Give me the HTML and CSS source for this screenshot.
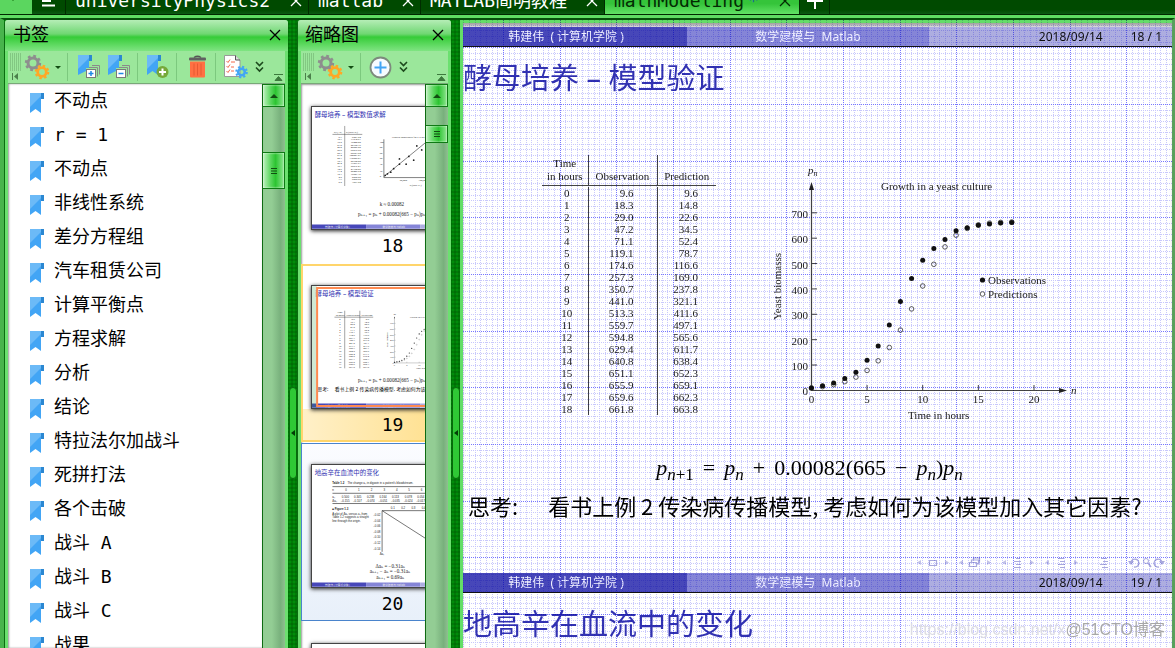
FILE: index.html
```html
<!DOCTYPE html>
<html lang="zh-CN">
<head>
<meta charset="utf-8">
<title>mathModeling</title>
<link rel="stylesheet" href="styles.css">
</head>
<body>
<svg class="defs" aria-hidden="true">
  <defs>
    <symbol id="i-bookmark" viewBox="0 0 14 20">
      <path d="M11 0h3v6h-3z" fill="#2b87d1"/>
      <path d="M0 0h11v20l-5.500-4L0 20z" fill="#42a5f5"/>
      <path d="M0 0h11v3L0 14z" fill="#6cbaf7"/>
    </symbol>
    <symbol id="i-gears" viewBox="0 0 26 26">
      <circle cx="9" cy="9" r="5" fill="none" stroke="#8e8e8e" stroke-width="3"/>
      <circle cx="9" cy="9" r="7" fill="none" stroke="#8e8e8e" stroke-width="2.400" stroke-dasharray="2.750 2.750"/>
      <circle cx="18" cy="18" r="4.300" fill="none" stroke="#ffa726" stroke-width="2.800"/>
      <circle cx="18" cy="18" r="6.200" fill="none" stroke="#ffa726" stroke-width="2.200" stroke-dasharray="2.430 2.430"/>
    </symbol>
    <symbol id="i-more" viewBox="0 0 9 12">
      <path d="M1 1l3.500 3.500L8 1M1 6.500L4.500 10 8 6.500" fill="none" stroke="#1d4a1d" stroke-width="1.600"/>
    </symbol>
    <symbol id="i-close" viewBox="0 0 12 12">
      <path d="M1 1l10 10M11 1L1 11" fill="none" stroke="currentColor" stroke-width="1.300"/>
    </symbol>
    <symbol id="i-pages" viewBox="0 0 23 24">
      <path d="M11 0h3v6h-3z" fill="#2b87d1"/>
      <path d="M0 0h11v13H8v3L0 20z" fill="#42a5f5"/>
      <path d="M0 0h11v3L0 14z" fill="#6cbaf7"/>
      <path d="M14 10.500h7.500v9M11 12.500h8.500v9" fill="none" stroke="#8a8a8a"/>
      <rect x="8.500" y="14.500" width="9" height="8" fill="#fff" stroke="#7a7a7a"/>
    </symbol>
    <symbol id="i-grip" viewBox="0 0 12 28">
      <path d="M0 1h12M0 3h12M0 5h12M0 7h12M0 9h12M0 11h12M0 13h12M0 15h12M0 17h12" stroke="#6ba86b" stroke-dasharray="1 1"/>
      <path d="M2.500 20v7" stroke="#4b804b"/>
      <path d="M8 20v7L4 23.500z" fill="#4b804b"/>
    </symbol>
    <symbol id="i-ext" viewBox="0 0 9 7">
      <path d="M0 .5h9M1 6.500h7L4.500 2.500z" fill="#3d7a3d" stroke="#3d7a3d"/>
    </symbol>
    <symbol id="i-up" viewBox="0 0 8 4"><path d="M0 4h8L4 0z" fill="#124d12"/></symbol>
    <symbol id="i-lines" viewBox="0 0 6 6"><path d="M0 .5h6M0 3h6M0 5.500h6" stroke="#124d12"/></symbol>
    <pattern id="mm-grid" x="40" y="84" width="170" height="170" patternUnits="userSpaceOnUse">
      <g fill="none" stroke-dasharray="1 1" shape-rendering="crispEdges">
        <path id="mm-minor" stroke="#c8c8fc"/>
        <path id="mm-major" stroke="#7777ff"/>
      </g>
    </pattern>
  </defs>
</svg>

<nav class="tabs" aria-label="文档">
  <span class="tab-grip"></span>
  <button class="tab-menu" aria-label="菜单"><svg width="13" height="12" viewBox="0 0 13 12"><path d="M0 1.500h9M0 6h9M0 10.500h13" stroke="#fff" stroke-width="2"/></svg></button>
  <div class="tab tab-a"><button>universityPhysics2</button><button class="x" aria-label="关闭"><svg><use href="#i-close"/></svg></button></div>
  <div class="tab tab-b"><button>matlab</button><button class="x" aria-label="关闭"><svg><use href="#i-close"/></svg></button></div>
  <div class="tab tab-c"><button>MATLAB简明教程</button><button class="x" aria-label="关闭"><svg><use href="#i-close"/></svg></button></div>
  <div class="tab tab-d active"><button>mathModeling<span class="dirty">*</span></button><button class="x" aria-label="关闭"><svg><use href="#i-close"/></svg></button></div>
  <button class="tab-add" aria-label="新建"><svg width="16" height="16" viewBox="0 0 16 16"><path d="M8 0v16M0 8h16" stroke="#fff" stroke-width="2"/></svg></button>
</nav>

<main class="work">
  <section class="panel bookmarks">
    <header><h2>书签</h2><button class="x" aria-label="关闭"><svg><use href="#i-close"/></svg></button></header>
    <div class="toolbar">
      <svg class="grip"><use href="#i-grip"/></svg>
      <button class="gears" aria-label="设置"><svg width="26" height="26"><use href="#i-gears"/></svg><span class="caret"></span></button>
      <i class="sep"></i>
      <button class="tb" aria-label="展开"><svg width="23" height="24"><use href="#i-pages"/><path d="M13 16v5M10.500 18.500h5" stroke="#1e88e5" stroke-width="1.500"/></svg></button>
      <button class="tb" aria-label="折叠"><svg width="23" height="24"><use href="#i-pages"/><path d="M10.500 18.500h5" stroke="#1e88e5" stroke-width="1.500"/></svg></button>
      <i class="sep"></i>
      <button class="tb" aria-label="添加书签"><svg width="23" height="24" viewBox="0 0 23 24"><use href="#i-bookmark" width="14" height="20"/><circle cx="15.500" cy="17" r="6" fill="#76a83a"/><path d="M15.500 13.500v7M12 17h7" stroke="#fff" stroke-width="2"/></svg></button>
      <i class="sep"></i>
      <button class="tb" aria-label="删除"><svg width="19" height="24" viewBox="0 0 19 24"><path d="M6 2.500q3.500-2.500 7 0" fill="none" stroke="#555" stroke-width="1.500"/><rect x="1" y="2.500" width="17" height="3" rx="1" fill="#606060"/><path d="M2 6.500h15v15q0 1-1 1H3q-1 0-1-1z" fill="#ff7043"/><path d="M6 8.500v12M9.500 8.500v12M13 8.500v12" stroke="#e65a32"/></svg></button>
      <i class="sep"></i>
      <button class="tb" aria-label="属性"><svg width="24" height="24" viewBox="0 0 24 24"><path d="M.5.500h11l4.500 4.500v16.500H.5z" fill="#fff" stroke="#9a9a9a"/><path d="M11.500.500V5H16" fill="#ddd" stroke="#555"/><path d="M2.500 6l1.500 1.500 2-3M2.500 11l1.500 1.500 2-3M2.500 16l1.500 1.500 2-3M7 7h4M7 12h3M7 16h3" fill="none" stroke="#f26b4d"/><circle cx="17.500" cy="17" r="3.300" fill="none" stroke="#42a5f5" stroke-width="2.600"/><circle cx="17.500" cy="17" r="5.300" fill="none" stroke="#42a5f5" stroke-width="2" stroke-dasharray="2.080 2.080"/></svg></button>
      <button class="more" aria-label="更多"><svg width="9" height="12"><use href="#i-more"/></svg></button>
      <svg class="ext"><use href="#i-ext"/></svg>
    </div>
    <div class="scroller">
      <ul class="marks">
        <li><svg><use href="#i-bookmark"/></svg><span>不动点</span></li>
        <li><svg><use href="#i-bookmark"/></svg><span>r = 1</span></li>
        <li><svg><use href="#i-bookmark"/></svg><span>不动点</span></li>
        <li><svg><use href="#i-bookmark"/></svg><span>非线性系统</span></li>
        <li><svg><use href="#i-bookmark"/></svg><span>差分方程组</span></li>
        <li><svg><use href="#i-bookmark"/></svg><span>汽车租赁公司</span></li>
        <li><svg><use href="#i-bookmark"/></svg><span>计算平衡点</span></li>
        <li><svg><use href="#i-bookmark"/></svg><span>方程求解</span></li>
        <li><svg><use href="#i-bookmark"/></svg><span>分析</span></li>
        <li><svg><use href="#i-bookmark"/></svg><span>结论</span></li>
        <li><svg><use href="#i-bookmark"/></svg><span>特拉法尔加战斗</span></li>
        <li><svg><use href="#i-bookmark"/></svg><span>死拼打法</span></li>
        <li><svg><use href="#i-bookmark"/></svg><span>各个击破</span></li>
        <li><svg><use href="#i-bookmark"/></svg><span>战斗 A</span></li>
        <li><svg><use href="#i-bookmark"/></svg><span>战斗 B</span></li>
        <li><svg><use href="#i-bookmark"/></svg><span>战斗 C</span></li>
        <li><svg><use href="#i-bookmark"/></svg><span>战果</span></li>
      </ul>
      <div class="bar"><button class="up" aria-label="向上"><svg width="8" height="4"><use href="#i-up"/></svg></button><div class="knob low"><svg width="6" height="6"><use href="#i-lines"/></svg></div></div>
    </div>
  </section>

  <div class="split"><span class="handle"></span></div>

  <section class="panel thumbs">
    <header><h2>缩略图</h2><button class="x" aria-label="关闭"><svg><use href="#i-close"/></svg></button></header>
    <div class="toolbar">
      <svg class="grip"><use href="#i-grip"/></svg>
      <button class="gears" aria-label="设置"><svg width="26" height="26"><use href="#i-gears"/></svg><span class="caret"></span></button>
      <i class="sep"></i>
      <button class="tb" aria-label="放大"><svg width="23" height="23" viewBox="0 0 23 23"><circle cx="11.500" cy="11.500" r="10" fill="#f6fbff" stroke="#7d8a7d" stroke-width="1.800"/><path d="M11.500 5.500v12M5.500 11.500h12" stroke="#42a5f5" stroke-width="2"/></svg></button>
      <button class="more" aria-label="更多"><svg width="9" height="12"><use href="#i-more"/></svg></button>
      <svg class="ext"><use href="#i-ext"/></svg>
    </div>
    <div class="scroller">
      <ol class="pages">
        <li>
          <svg class="page" viewBox="441 46 728 546">
            <text class="t-title" x="453" y="88">酵母培养 – 模型数值求解</text>
            <g class="t-small">
              <path d="M533 168h134M588 130v270" stroke="#333" stroke-width="2"/>
              <text x="540" y="160">pₙ₊₁−pₙ</text><text x="594" y="160">pₙ(665−pₙ)</text>
              <g id="diff-table"></g>
              <path d="M764 190v172h340M764 358L1000 165" fill="none" stroke="#444" stroke-width="3"/>
              <text x="800" y="183">Growth constrained for a yeast</text>
              <text x="745" y="205">100</text><text x="745" y="230">80</text><text x="745" y="255">60</text><text x="745" y="280">50</text><text x="745" y="305">30</text><text x="745" y="335">10</text><text x="745" y="360">0</text>
              <text x="835" y="378">50,000</text><text x="920" y="378">100,000</text><text x="880" y="398">pₙ(665−pₙ)</text>
              <g fill="#222"><circle cx="770" cy="352" r="4"/><circle cx="780" cy="345" r="4"/><circle cx="795" cy="338" r="4"/><circle cx="808" cy="322" r="4"/><circle cx="834" cy="302" r="4"/><circle cx="834" cy="278" r="4"/><circle cx="864" cy="302" r="4"/><circle cx="876" cy="267" r="4"/><circle cx="898" cy="284" r="4"/><circle cx="912" cy="220" r="4"/><circle cx="934" cy="238" r="4"/></g>
            </g>
            <text class="t-math" x="745" y="490">k ≈ 0.00082</text>
            <text class="t-math" x="648" y="533">pₙ₊₁ = pₙ + 0.00082(665 − pₙ)pₙ</text>
            <g class="t-foot"><path d="M441 573h243v19H441z" fill="#4747b9"/><path d="M684 573h243v19H684z" fill="#8585d7"/><path d="M927 573h242v19H927z" fill="#adade0"/><text x="500" y="587">韩建伟 ( 计算机学院 )</text><text x="758" y="587">数学建模与 Matlab</text></g>
          </svg><b>18</b>
        </li>
        <li class="current">
          <svg class="page" viewBox="441 46 728 546">
            <text class="t-title" x="457" y="88">酵母培养 – 模型验证</text>
            <g class="t-small" id="yeast-table"><path d="M542 185h174M588 156v259M656 156v259" stroke="#333" stroke-width="2"/><text x="554" y="168">Time</text><text x="548" y="181">in hours</text><text x="596" y="179">Observation</text><text x="663" y="179">Prediction</text></g>
            <use href="#yeast-chart"/>
            <text class="t-math" x="648" y="478">pₙ₊₁ = pₙ + 0.00082(665 − pₙ)pₙ</text>
            <text class="t-body" x="465" y="515">思考:</text><text class="t-body" x="543" y="515">看书上例 2 传染病传播模型, 考虑如何为该模型</text>
            <g class="t-foot"><path d="M441 573h243v19H441z" fill="#4747b9"/><path d="M684 573h243v19H684z" fill="#8585d7"/><path d="M927 573h242v19H927z" fill="#adade0"/><text x="500" y="587">韩建伟 ( 计算机学院 )</text><text x="758" y="587">数学建模与 Matlab</text></g>
            <path d="M441 46h22v546h-22z" fill="#2a9a3a" fill-opacity=".22"/>
            <path d="M464 54h720v530H464z" fill="none" stroke="#ff8a50" stroke-width="9"/>
          </svg><b>19</b>
        </li>
        <li class="hover">
          <svg class="page" viewBox="441 46 728 546">
            <text class="t-title" x="453" y="88">地高辛在血流中的变化</text>
            <g class="t-mid">
              <text x="532" y="132" font-weight="bold">Table 1.2</text><text x="600" y="132">The change aₙ in digoxin in a patient's bloodstream.</text>
              <path d="M533 142h560M533 172h560M533 218h560" stroke="#333" stroke-width="3"/>
              <text x="532" y="164">n</text><text x="590" y="164">0</text><text x="648" y="164">1</text><text x="705" y="164">2</text><text x="762" y="164">3</text><text x="818" y="164">4</text><text x="874" y="164">5</text><text x="930" y="164">6</text>
              <text x="532" y="194">aₙ</text><text x="575" y="194">0.500</text><text x="630" y="194">0.345</text><text x="688" y="194">0.238</text><text x="744" y="194">0.164</text><text x="800" y="194">0.113</text><text x="858" y="194">0.078</text><text x="914" y="194">0.054</text>
              <text x="532" y="213">Δaₙ</text><text x="570" y="213">−0.155</text><text x="625" y="213">−0.107</text><text x="683" y="213">−0.074</text><text x="740" y="213">−0.051</text><text x="796" y="213">−0.035</text><text x="853" y="213">−0.024</text><text x="909" y="213">−0.017</text>
              <text x="532" y="246" font-weight="bold">■ Figure 1.3</text><text x="532" y="268">A plot of Δaₙ versus aₙ from</text><text x="532" y="284">Table 1.2 suggests a straight</text><text x="532" y="300">line through the origin.</text>
              <path d="M756 250h200M756 250v185M756 250L975 390" fill="none" stroke="#333" stroke-width="3"/>
              <text x="795" y="244">0.1</text><text x="842" y="244">0.2</text><text x="888" y="244">0.3</text><text x="934" y="244">0.4</text>
              <text x="716" y="275">−0.02</text><text x="716" y="300">−0.04</text><text x="716" y="325">−0.06</text><text x="716" y="350">−0.08</text><text x="716" y="375">−0.10</text><text x="716" y="400">−0.12</text><text x="716" y="425">−0.14</text><text x="745" y="450">Δaₙ</text>
            </g>
            <text class="t-math" x="726" y="508">Δaₙ = −0.31aₙ</text><text class="t-math" x="700" y="532">aₙ₊₁ − aₙ = −0.31aₙ</text><text class="t-math" x="730" y="558">aₙ₊₁ = 0.69aₙ</text>
            <g class="t-foot"><path d="M441 573h243v19H441z" fill="#4747b9"/><path d="M684 573h243v19H684z" fill="#8585d7"/><path d="M927 573h242v19H927z" fill="#adade0"/><text x="500" y="587">韩建伟 ( 计算机学院 )</text><text x="758" y="587">数学建模与 Matlab</text></g>
          </svg><b>20</b>
        </li>
        <li><svg class="page" viewBox="441 46 728 546"></svg></li>
      </ol>
      <div class="bar"><button class="up" aria-label="向上"><svg width="8" height="4"><use href="#i-up"/></svg></button><div class="knob high"><svg width="6" height="6"><use href="#i-lines"/></svg></div></div>
    </div>
  </section>

  <div class="split"><span class="handle"></span></div>

  <article class="viewer">
    <div class="foot"><span>韩建伟 &nbsp;( 计算机学院 )</span><span>数学建模与 &nbsp;Matlab</span><span><time>2018/09/14</time><em>18 / 1</em></span></div>
    <section class="slide">
      <h1>酵母培养 – 模型验证</h1>
      <div class="figures">
        <table class="data">
          <thead><tr><th>Time<br>in hours</th><th>Observation</th><th>Prediction</th></tr></thead>
          <tbody id="rows"></tbody>
        </table>
        <svg class="chart" viewBox="768 155 312 266">
          <g id="yeast-chart" class="axis-text">
            <path d="M811.500 390.500V188M811 390.500h248" fill="none" stroke="#444" stroke-width="1.200"/>
            <path d="M811.500 182l-2.500 8h5zM1067 390.500l-8-2.500v5z" fill="#222"/>
            <text x="808" y="174" font-style="italic">p<tspan dy="2" font-size="8">n</tspan></text>
            <text x="1071" y="394" font-style="italic">n</text>
            <text x="881" y="190">Growth in a yeast culture</text>
            <text x="908" y="419">Time in hours</text>
            <text transform="translate(781 320) rotate(-90)">Yeast biomasss</text>
            <text x="988" y="284">Observations</text><text x="988" y="298">Predictions</text>
            <circle cx="982.500" cy="280" r="2.600" fill="#111"/><circle cx="982.500" cy="294" r="2.300" fill="#fff" stroke="#333" stroke-width=".8"/>
            <g id="plot"></g>
          </g>
        </svg>
      </div>
      <p class="formula"><i>p<sub>n<span>+1</span></sub></i><span class="op">=</span><i>p<sub>n</sub></i><span class="op">+</span>0.00082(665<span class="op">−</span><i>p<sub>n</sub></i>)<i>p<sub>n</sub></i></p>
      <p class="think"><span>思考:</span><span>看书上例 2 传染病传播模型, 考虑如何为该模型加入其它因素?</span></p>
      <svg class="nav" width="250" height="12" viewBox="916 557 250 12">
        <g fill="#c3c3e8"><path d="M921 560v5l-4-2.500zM945 560v5l4-2.500zM963 560v5l-4-2.500zM987 560v5l4-2.500zM1006 560v5l-4-2.500zM1030 560v5l4-2.500zM1049 560v5l-4-2.500zM1074 560v5l4-2.500z"/></g>
        <g fill="none" stroke="#a9a9dd"><path d="M929.500 560.500h7v5h-7zM969.500 562.500h7v4h-7zM971.500 562v-2h7v4h-2M973.500 560v-2h6v4h-1M1016 558.500h4M1014 561.500h7M1016 564.500h5M1014 567.500h7M1058 558.500h6M1060 561.500h5M1058 564.500h7M1060 567.500h5M1101 558.500h6M1103 561.500h5M1100 564.500h7M1102 567.500h6" stroke-width="1.200"/><path d="M1131 562a4 4 0 1 1 3 5M1162 562a4 4 0 1 0-3 5" stroke-width="1.400"/><circle cx="1146" cy="561" r="2.500"/><path d="M1148 563l3 4" stroke-width="1.600"/></g>
        <path d="M1128 561h6l-3 4zM1159 561h6l-3 4z" fill="#a9a9dd"/>
      </svg>
    </section>
    <div class="foot"><span>韩建伟 &nbsp;( 计算机学院 )</span><span>数学建模与 &nbsp;Matlab</span><span><time>2018/09/14</time><em>19 / 1</em></span></div>
    <section class="slide"><h1>地高辛在血流中的变化</h1></section>
    <svg class="grid"><rect width="100%" height="100%" fill="url(#mm-grid)"/></svg>
    <div class="mark"><span>https://blog.csdn.net/x</span><span>@51CTO博客</span></div>
  </article>
</main>
<script src="script.js"></script>
</body>
</html>
```
FILE: styles.css
```css
* { box-sizing: border-box; }
body {
  margin: 0; height: 100vh; overflow: hidden; display: flex; flex-direction: column;
  background: #5fdc63; color: #000;
  font: 18px/22px "DejaVu Sans Mono", "Noto Sans CJK SC", monospace;
}
button { font: inherit; color: inherit; background: none; border: 0; padding: 0; margin: 0; display: flex; align-items: center; justify-content: center; }
h1, h2, p, ul, ol { margin: 0; padding: 0; font-weight: normal; }
h2 { font-size: 18px; }
svg { display: block; flex: none; }
.defs { position: absolute; width: 0; height: 0; }

/* document tabs */
.tabs { flex: none; height: 15px; display: flex; align-items: flex-end; overflow: hidden; background: linear-gradient(#004a00 70%, #0b5a14); color: #fff; border-bottom: 1px solid #002800; }
.tab-grip { width: 32px; height: 15px; background: radial-gradient(circle, #39a539 1px, transparent 1px) 12px 0 / 3px 3px no-repeat, #5bd65f; }
.tab-menu { width: 34px; height: 26px; border-right: 1px solid #002c00; }
.tab { height: 26px; display: flex; align-items: center; justify-content: space-between; padding: 0 6px 0 9px; border-right: 1px solid #002c00; white-space: nowrap; }
.tab-a { width: 243px; }
.tab-b { width: 112px; }
.tab-c { width: 184px; }
.tab-d { width: 195px; }
.tab.active { background: linear-gradient(#35c43a 60%, #62e266); color: #032b03; padding-right: 8px; }
.dirty { color: #1560a0; margin-left: 4px; }
.x svg { width: 12px; height: 12px; }
.tab-add { width: 30px; height: 26px; border-right: 1px solid #002c00; }

/* work area */
.work { flex: 1; min-height: 0; margin-top: 3px; display: flex; border-top: 2px solid #064f0b; border-left: 4px solid #48b44c; border-right: 3px solid #58a05c; background: #007a08; }
.panel { flex: none; display: flex; flex-direction: column; padding: 0 3px; background: #6be06f; border-radius: 3px 3px 0 0; border-left: 1px solid #0a6b10; }
.bookmarks { width: 284px; }
.thumbs { width: 154px; }
.panel header { flex: none; height: 31px; margin: 0 -3px; padding: 0 7px 2px 8px; display: flex; align-items: center; justify-content: space-between; background: linear-gradient(#b5edb6, #6fd772 45%, #36cc38 55%, #7fe482); border-radius: 3px 3px 0 0; }
.thumbs header { padding-left: 7px; }
.toolbar { flex: none; height: 33px; display: flex; align-items: center; background: #9be79b; border-bottom: 1px solid #78a878; padding-left: 2px; }
.grip { width: 12px; height: 28px; }
.gears { padding-left: 2px; }
.caret { border: 3px solid transparent; border-top-color: #124d12; margin: 3px 6px 0 5px; }
.sep { width: 1px; height: 28px; background: #7cc97e; margin-right: 9px; }
.tb { width: 24px; height: 28px; margin-right: 6px; }
.bookmarks .toolbar .sep ~ .sep { margin-right: 8px; }
.more { width: 10px; height: 28px; }
.thumbs .toolbar .sep { margin-right: 7px; }
.ext { width: 9px; height: 7px; margin-left: auto; align-self: flex-end; margin-bottom: 2px; margin-right: 2px; }

.scroller { flex: 1; min-height: 0; display: flex; background: #fff; }
.marks { flex: 1; list-style: none; overflow: hidden; box-shadow: inset 1px 0 2px #9a9a9a; }
.marks li { height: 34px; display: flex; align-items: center; padding-left: 22px; gap: 10px; white-space: pre; }
.marks svg { width: 14px; height: 20px; margin-top: 4px; }
.bar { flex: none; width: 23px; border-left: 1px solid #0e6a12; background: linear-gradient(90deg, #93cd94 40%, #78b07c 80%, #8fbf90); }
.up, .knob { width: 22px; background: linear-gradient(90deg, #bdf0be, #5fd862 35%, #2cc431 60%, #8ee690); border: 1px solid #0e7a14; border-left: 0; display: flex; align-items: center; justify-content: center; box-shadow: inset 0 0 2px #fff; }
.up { height: 23px; }
.low { height: 37px; margin-top: 45px; }
.high { height: 18px; margin-top: 18px; }

.split { flex: none; width: 9px; display: flex; align-items: center; justify-content: center; padding-top: 198px; background: radial-gradient(circle, #008c0a 1px, #006d06 2px) 0 0 / 4px 4px; }
.handle { width: 8px; height: 92px; border-radius: 4px; background: #2fc835; border: 1px solid #08680c; display: flex; align-items: center; }
.handle::before { content: ""; border: 3px solid transparent; border-right: 4px solid #033d06; border-left: 0; margin-left: 1px; }

/* thumbnails */
.pages { flex: 1; overflow: hidden; list-style: none; padding-top: 1px; box-shadow: inset 1px 1px 2px #9a9a9a; }
.pages li { width: 183px; height: 178px; margin-bottom: 1px; padding: 20px 9px 0 9px; border: 1px solid transparent; display: flex; flex-direction: column; align-items: center; }
.pages b { font-weight: normal; line-height: 32px; }
.page { width: 164px; height: 124px; background: #fff; border: 1px solid #444; box-shadow: 0 1px 4px #222; }
.pages .current { border: 2px solid #ffd56b; background: linear-gradient(#fff 82%, transparent 82%), linear-gradient(90deg, #fff0c8, #ffdb7c); padding: 19px 8px 0 8px; }
.pages .hover { border-color: #4a84cc; background: linear-gradient(#fbfcff, #e8f0fa); }
.t-title { font: 29px "Noto Sans", "Noto Sans CJK SC", sans-serif; fill: #3333b2; }
.t-body { font: 22px "Noto Sans", "Noto Sans CJK SC", sans-serif; }
.t-math { font: 23px "Liberation Serif", "DejaVu Serif", serif; fill: #222; }
.t-small, .axis-text { font: 11px "Liberation Serif", serif; fill: #1a1a1a; }
.t-small { font-size: 12px; }
.t-mid { font: 13px "Liberation Sans", sans-serif; fill: #222; }
.t-foot { font: 12px "Noto Sans CJK SC", sans-serif; fill: #eee; }
.end { text-anchor: end; }
.mid { text-anchor: middle; }

/* document view */
.viewer { flex: 1; min-width: 0; position: relative; isolation: isolate; overflow: hidden; background: #fff; border-left: 3px solid #64dd68; padding-top: 7px; box-shadow: inset 0 3px 0 #64dd68, inset 0 8px 4px -2px #999; }
.foot { display: grid; grid-template-columns: 224fr 242fr 243fr; height: 20px; border-bottom: 1px solid #111; font: 12px/19px "Noto Sans", "Noto Sans CJK SC", sans-serif; white-space: nowrap; }
.foot span { text-align: center; color: #f1f1ff; background: #4747b9; padding-right: 18px; }
.foot span + span { background: #8585d7; padding-right: 0; }
.foot span:last-child { background: #adade0; color: #111; display: flex; justify-content: flex-end; gap: 28px; padding-right: 10px; }
.foot em { font-style: normal; }
.slide { display: flex; flex-direction: column; }
.slide h1 { font: 29px/62px "Noto Sans", "Noto Sans CJK SC", sans-serif; color: #3333b2; white-space: nowrap; }
.figures { display: flex; align-items: flex-start; gap: 52px; margin-top: 46px; padding-left: 79px; }
.data { flex: none; width: 174px; border-collapse: collapse; table-layout: fixed; font: 11px/12px "Liberation Serif", serif; color: #1a1a1a; }
.data th { font-weight: normal; height: 30px; padding: 0 0 2px; border-bottom: 1px solid #444; vertical-align: bottom; line-height: 13px; }
.data th:first-child { width: 46px; }
.data th:nth-child(2) { width: 69px; }
.data tbody::before { content: ""; display: table-row; height: 2px; }
.data td { padding: 0; text-align: right; height: 12px; }
.data td:first-child { text-align: center; padding-left: 4px; }
.data td:nth-child(2) { padding-right: 23px; }
.data td:nth-child(3) { padding-right: 18px; }
.data th + th, .data td + td { border-left: 1px solid #444; }
.chart { width: 312px; height: 266px; }
.formula { margin-top: 32px; padding-right: 16px; text-align: center; font: 22px/30px "Liberation Serif", serif; }
.formula sub { font-size: 17px; line-height: 0; }
.formula sub span { font-style: normal; }
.op { margin: 0 9px; }
.think { margin-top: 5px; padding-left: 5px; display: flex; gap: 30px; font: 22px/34px "Noto Sans CJK SC", sans-serif; white-space: nowrap; }
.nav { align-self: flex-end; margin: 35px 6px 4px 0; }
.grid { position: absolute; inset: 0; width: 100%; height: 100%; pointer-events: none; mix-blend-mode: multiply; }
.mark { position: absolute; right: 7px; bottom: 6px; display: flex; font: 16px/24px "Liberation Sans", "Noto Sans CJK SC", sans-serif; color: #a8a8a8; white-space: nowrap; }
.mark span:first-child { color: #dcdce4; }
```
FILE: script.js
```js
const observed = [9.6, 18.3, 29.0, 47.2, 71.1, 119.1, 174.6, 257.3, 350.7, 441.0, 513.3, 559.7, 594.8, 629.4, 640.8, 651.1, 655.9, 659.6, 661.8];
const predicted = [9.6, 14.8, 22.6, 34.5, 52.4, 78.7, 116.6, 169.0, 237.8, 321.1, 411.6, 497.1, 565.6, 611.7, 638.4, 652.3, 659.1, 662.3, 663.8];
const px = n => 811.4 + n * 11.13;
const py = v => 390.4 - v * 0.2537;

document.getElementById("rows").innerHTML = observed.map((o, n) =>
  `<tr><td>${n}</td><td>${o.toFixed(1)}</td><td>${predicted[n].toFixed(1)}</td></tr>`).join("");

let plot = "";
for (let v = 0; v <= 700; v += 100) {
  plot += `<path d="M811 ${py(v)}h6" stroke="#444"/><text class="end" x="808" y="${py(v) + 5}">${v}</text>`;
}
for (let n = 0; n <= 20; n += 5) {
  plot += `<path d="M${px(n)} 390v-5" stroke="#444"/><text class="mid" x="${px(n)}" y="403">${n}</text>`;
}
predicted.forEach((v, n) => { plot += `<circle cx="${px(n)}" cy="${py(v)}" r="2.300" fill="#fff" stroke="#333" stroke-width=".8"/>`; });
observed.forEach((v, n) => { plot += `<circle cx="${px(n)}" cy="${py(v)}" r="2.500" fill="#111"/>`; });
document.getElementById("plot").innerHTML = plot;

document.getElementById("yeast-table").innerHTML += observed.map((o, n) =>
  `<text class="mid" x="567" y="${197 + n * 12}">${n}</text><text class="end" x="634" y="${197 + n * 12}">${o.toFixed(1)}</text><text class="end" x="698" y="${197 + n * 12}">${predicted[n].toFixed(1)}</text>`).join("");
document.getElementById("diff-table").innerHTML = observed.slice(0, 18).map((o, n) =>
  `<text class="end" x="575" y="${182 + n * 12}">${(observed[n + 1] - o).toFixed(1)}</text><text class="end" x="660" y="${182 + n * 12}">${(o * (665 - o)).toFixed(2)}</text>`).join("");

const minor = [], major = [];
for (let k = 0; k < 30; k++) {
  const p = Math.round(k * 170 / 30) + 0.5;
  (k % 10 ? minor : major).push(`M${p} 0V170M0 ${p}H170`);
}
document.getElementById("mm-minor").setAttribute("d", minor.join(""));
document.getElementById("mm-major").setAttribute("d", major.join(""));
```
